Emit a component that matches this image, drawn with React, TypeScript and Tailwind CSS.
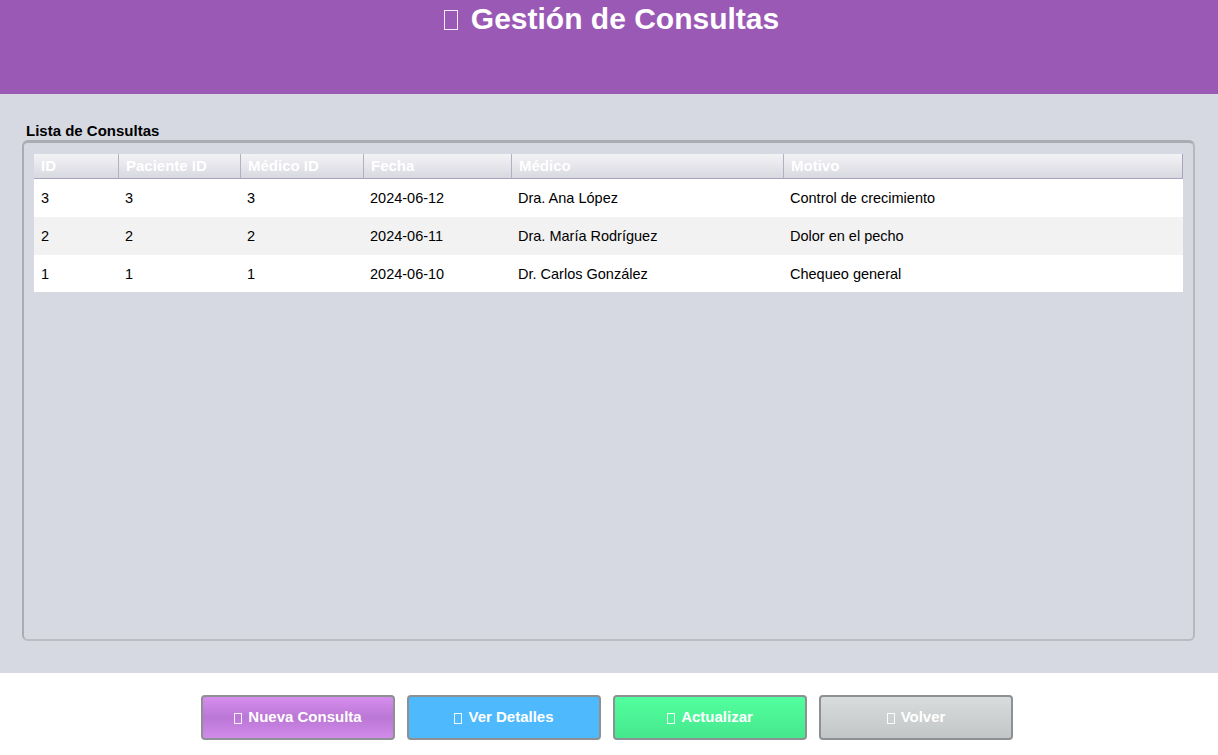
import React from "react";

const rows = [
  { id: "3", paciente: "3", medicoId: "3", fecha: "2024-06-12", medico: "Dra. Ana López", motivo: "Control de crecimiento" },
  { id: "2", paciente: "2", medicoId: "2", fecha: "2024-06-11", medico: "Dra. María Rodríguez", motivo: "Dolor en el pecho" },
  { id: "1", paciente: "1", medicoId: "1", fecha: "2024-06-10", medico: "Dr. Carlos González", motivo: "Chequeo general" },
];

const cols = [
  { label: "ID", w: "w-[84px]" },
  { label: "Paciente ID", w: "w-[122px]" },
  { label: "Médico ID", w: "w-[123px]" },
  { label: "Fecha", w: "w-[148px]" },
  { label: "Médico", w: "w-[272px]" },
  { label: "Motivo", w: "flex-1" },
];

const Glyph = ({ size = "small" }: { size?: "small" | "big" }) => (
  <span
    className={
      size === "big"
        ? "inline-block w-[14px] h-[20px] border-[1.5px] border-white/90 mr-[13px] translate-y-[1px]"
        : "inline-block w-[8px] h-[11px] border border-white/90 mr-[6px] translate-y-[1px]"
    }
  ></span>
);

const buttons = [
  { label: "Nueva Consulta", cls: "bg-gradient-to-b from-[#d68eee] via-[#bb77d6] to-[#d18bea] text-white" },
  { label: "Ver Detalles", cls: "bg-[#4fb9fe] text-white" },
  { label: "Actualizar", cls: "bg-gradient-to-b from-[#52ff9f] to-[#45e88c] text-white" },
  { label: "Volver", cls: "bg-gradient-to-b from-[#d9dcdd] to-[#c2c6c6] text-white" },
];

export default function App() {
  return (
    <div className="w-[1218px] h-[755px] flex flex-col bg-white font-['Liberation_Sans',Arial,sans-serif]">
      <header className="h-[94px] bg-[#9b59b6] flex justify-center">
        <h1 className="text-white font-bold text-[30px] leading-none mt-[5px] flex items-center h-[28px] pl-[5px]">
          <Glyph size="big" />
          Gestión de Consultas
        </h1>
      </header>

      <main className="h-[579px] bg-[#d6d9e1] px-[22px] pt-[28px]">
        <div className="text-[15px] font-bold text-black pl-[4px] leading-[18px]">Lista de Consultas</div>
        <div className="h-[501px] w-[1173px] rounded-[6px] border-2 border-t-[3px] border-[#a9acb2] border-r-[#b5b8bd] border-b-[#b9bcc1] px-[10px] pt-[11px]">
          <div className="flex h-[25px] bg-gradient-to-b from-[#f3f3f6] to-[#d8d8e0] border-b border-[#a9a4bd] border-r border-r-[#a9a4bd]">
            {cols.map((c, i) => (
              <div
                key={c.label}
                className={`${c.w} ${i > 0 ? "border-l border-[#b4b0c4]" : ""} px-[7px] text-[15px] font-bold text-white leading-[24px]`}
              >
                {c.label}
              </div>
            ))}
          </div>
          {rows.map((r, i) => (
            <div key={r.id} className={`flex items-center pt-[2px] text-[14.5px] text-black ${i % 2 === 1 ? "bg-[#f2f2f2]" : "bg-white"} ${i === 2 ? "h-[37px]" : "h-[38px]"}`}>
              <div className="w-[84px] px-[7px]">{r.id}</div>
              <div className="w-[122px] px-[7px]">{r.paciente}</div>
              <div className="w-[123px] px-[7px]">{r.medicoId}</div>
              <div className="w-[148px] px-[7px]">{r.fecha}</div>
              <div className="w-[272px] px-[7px]">{r.medico}</div>
              <div className="flex-1 px-[7px]">{r.motivo}</div>
            </div>
          ))}
        </div>
      </main>

      <footer className="flex-1 flex justify-center pt-[22px] gap-[12px] pr-[4px]">
        {buttons.map((b) => (
          <button
            key={b.label}
            className={`w-[194px] h-[45px] rounded-[4px] border-2 border-[#8e9193] ${b.cls} text-[15px] font-bold flex items-center justify-center`}
          >
            <Glyph />
            {b.label}
          </button>
        ))}
      </footer>
    </div>
  );
}
